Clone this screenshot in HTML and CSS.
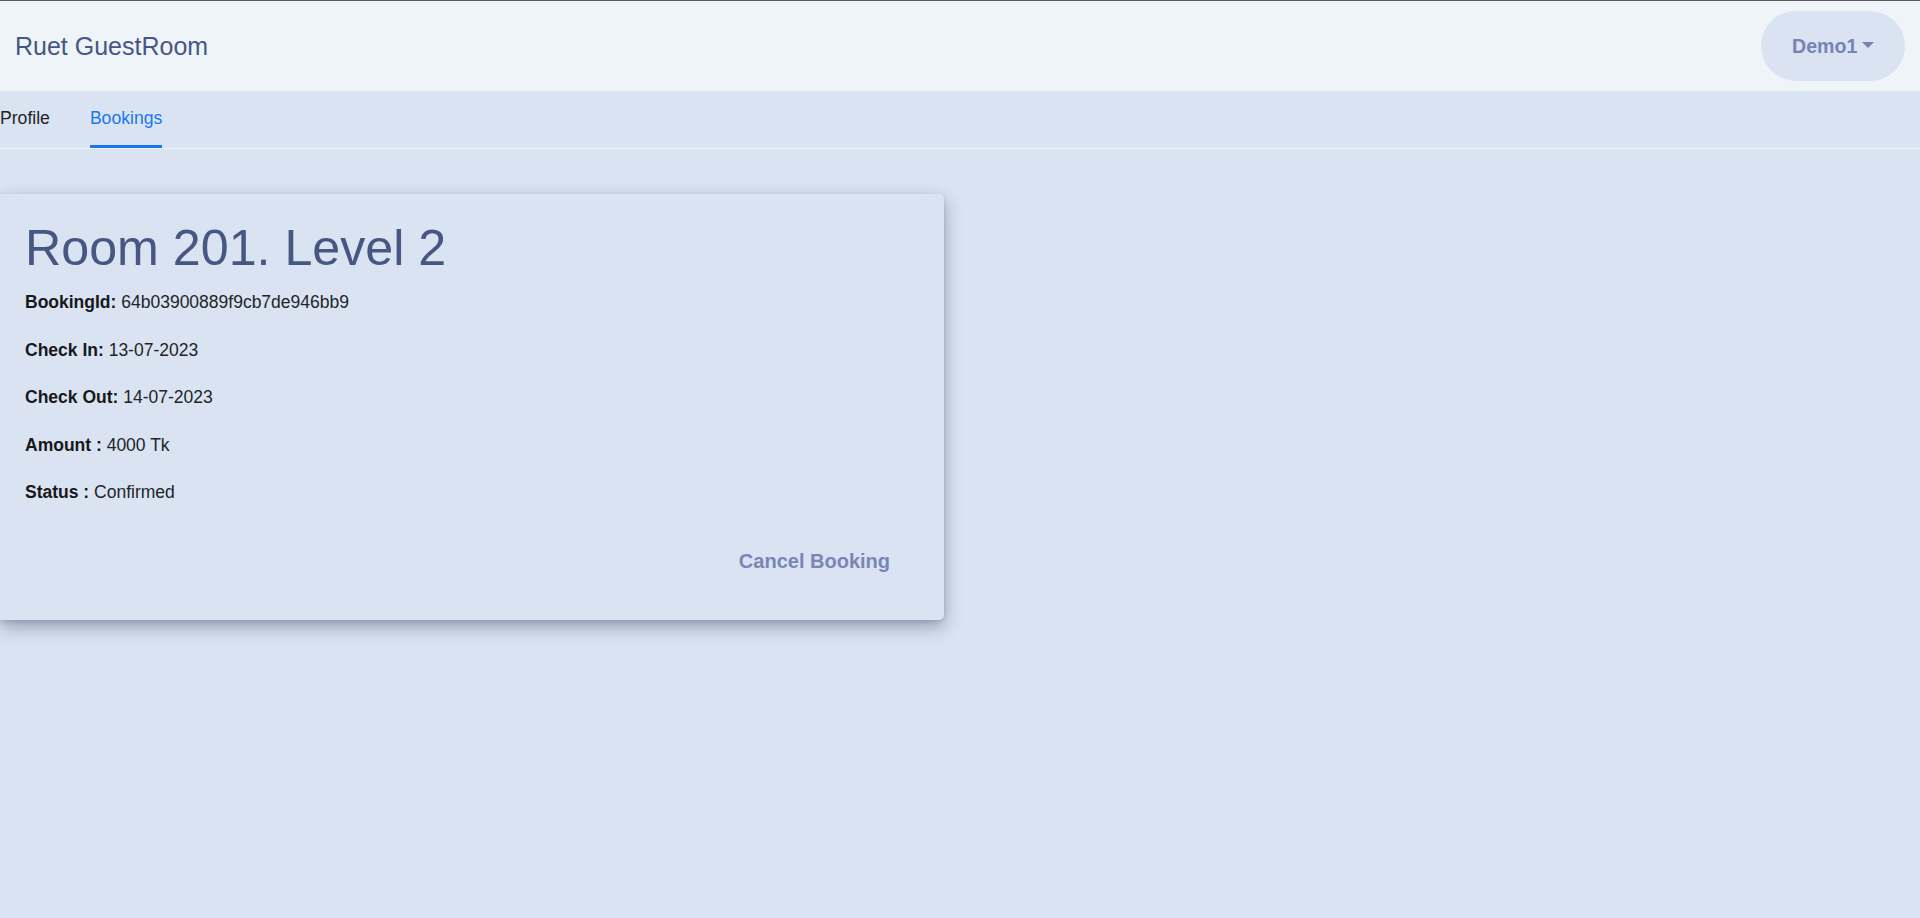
FILE: index.html
```html
<!DOCTYPE html>
<html lang="en">
<head>
<meta charset="utf-8">
<title>Ruet GuestRoom</title>
<link rel="stylesheet" href="styles.css">
</head>
<body>
  <header class="topbar">
    <a class="brand" href="#">Ruet GuestRoom</a>
    <button class="user-btn" type="button">Demo1<span class="caret"></span></button>
  </header>
  <nav class="tabs">
    <a class="tab" href="#">Profile</a>
    <a class="tab active" href="#">Bookings</a>
  </nav>
  <main class="content">
    <section class="card">
      <h1 class="card-title">Room 201. Level 2</h1>
      <p class="row"><b>BookingId:</b> 64b03900889f9cb7de946bb9</p>
      <p class="row"><b>Check In:</b> 13-07-2023</p>
      <p class="row"><b>Check Out:</b> 14-07-2023</p>
      <p class="row"><b>Amount :</b> 4000 Tk</p>
      <p class="row last"><b>Status :</b> Confirmed</p>
      <div class="actions">
        <button class="cancel-btn" type="button">Cancel Booking</button>
      </div>
    </section>
  </main>
</body>
</html>
```
FILE: styles.css
```css
* { box-sizing: border-box; }
html, body { margin: 0; padding: 0; }
body {
  background: #dae3f1;
  font-family: "Liberation Sans", Arial, sans-serif;
  color: #212529;
  min-height: 918px;
}
.topbar {
  height: 91px;
  border-top: 1px solid #555a60;
  background: #eff4f9;
  display: flex;
  align-items: center;
  justify-content: space-between;
  padding: 0 15px 0 15px;
}
.brand {
  font-size: 25px;
  color: #475784;
  text-decoration: none;
  line-height: 1;
}
.user-btn {
  width: 144px;
  height: 70px;
  padding: 0 0 0 31px;
  border: none;
  border-radius: 35px;
  background: #dae3f1;
  color: #7683b8;
  font-family: "Liberation Sans", Arial, sans-serif;
  font-weight: bold;
  font-size: 19.6px;
  display: flex;
  align-items: center;
  justify-content: flex-start;
}
.caret {
  display: inline-block;
  margin-left: 5px;
  width: 0;
  height: 0;
  border-top: 6px solid #7683b8;
  border-left: 6px solid transparent;
  border-right: 6px solid transparent;
  margin-top: -2px;
}
.tabs {
  display: flex;
  gap: 40px;
  height: 58px;
  border-bottom: 1px solid #eef1f6;
}
.tab {
  display: flex;
  align-items: center;
  font-size: 17.6px;
  color: #222428;
  text-decoration: none;
  border-bottom: 3px solid transparent;
  padding-top: 1px;
}
.tab.active {
  color: #1a77f2;
  border-bottom-color: #1a77f2;
}
.content {
  padding-top: 45px;
}
.card {
  width: 944px;
  background: #dae3f1;
  border-radius: 0 5px 5px 0;
  box-shadow: 0 7px 18px rgba(40, 52, 84, 0.38), 0 2px 5px rgba(40, 52, 84, 0.14);
  padding: 26px 0 0 25px;
}
.card-title {
  margin: 0 0 13px;
  font-size: 50.2px;
  font-weight: normal;
  line-height: 57px;
  color: #475784;
}
.row {
  margin: 0 0 23.5px;
  font-size: 17.5px;
  line-height: 24px;
  color: #212529;
}
.row b { color: #16181b; }
.row.last { margin-bottom: 0; }
.actions {
  display: flex;
  justify-content: flex-end;
  padding: 39px 38px 41px 0;
}
.cancel-btn {
  border: none;
  background: transparent;
  color: #7986b8;
  font-family: "Liberation Sans", Arial, sans-serif;
  font-weight: bold;
  font-size: 20px;
  line-height: 36px;
  padding: 0 16px;
}
```
